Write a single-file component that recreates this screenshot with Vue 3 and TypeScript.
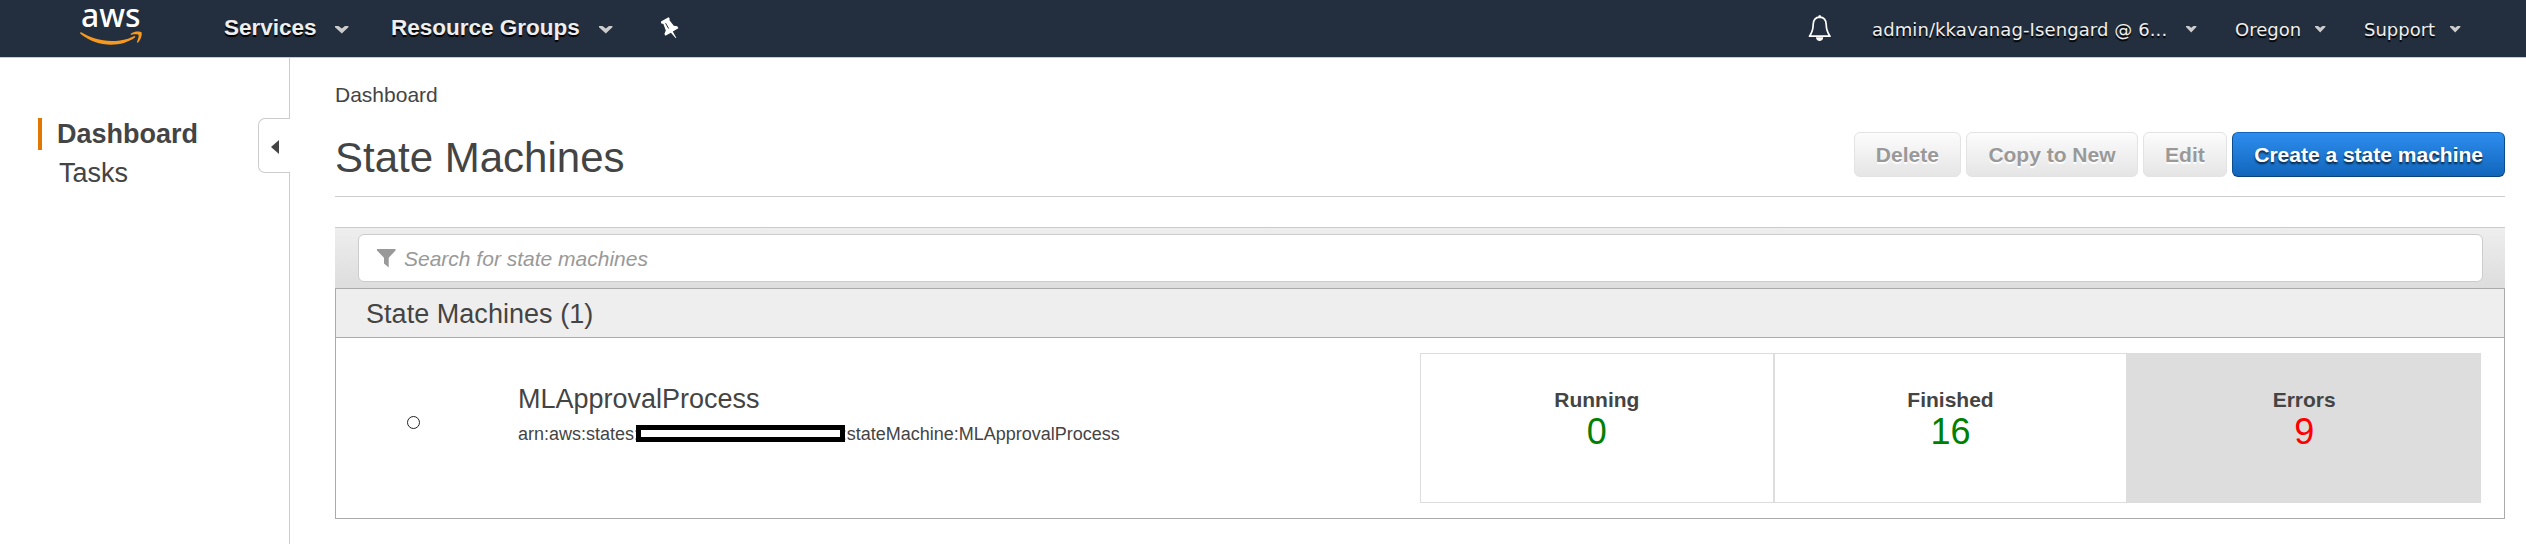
<script setup lang="ts">
interface Stat { label: string; value: number; kind: 'ok' | 'error' }

const mainMenus: { label: string; cls: string }[] = [
  { label: 'Services', cls: 'services' },
  { label: 'Resource Groups', cls: 'groups' },
]
const accountMenus: { label: string; cls: string }[] = [
  { label: 'admin/kkavanag-Isengard @ 6...', cls: 'user' },
  { label: 'Oregon', cls: 'region' },
  { label: 'Support', cls: 'support' },
]
const actions: string[] = ['Delete', 'Copy to New', 'Edit']
const stats: Stat[] = [
  { label: 'Running', value: 0, kind: 'ok' },
  { label: 'Finished', value: 16, kind: 'ok' },
  { label: 'Errors', value: 9, kind: 'error' },
]
</script>

<template>
  <div class="page">
    <header class="nav">
      <svg class="logo" viewBox="0 0 100 56" width="100" height="56">
        <text x="21" y="27.3" textLength="59.5" lengthAdjust="spacingAndGlyphs" class="logo-text">aws</text>
        <path fill="#f7981f" d="M21.2 32.3 C33 39.500 50 44 68 38.700 Q71 37.800 73.800 36.300 Q75.800 35.600 75 37.400 C61 47.600 37 47.600 20.300 33.700 Q19.500 32.300 21.200 32.300Z" />
        <path fill="#f7981f" d="M71 33.500 C74 31 80 31 81.500 32.200 C82.500 34 81 39.500 78 42.600 Q76.600 43.400 77 41.800 C78.200 38.500 79.100 35.600 78.500 34.900 C77.700 34.100 74.500 34.300 71.500 34.700 Q69.800 34.700 71 33.500Z" />
      </svg>
      <nav class="main-menus">
        <a v-for="m in mainMenus" :key="m.label" class="menu" :class="m.cls">
          <span>{{ m.label }}</span>
          <svg width="14" height="8" viewBox="0 0 14 8"><path fill="#ccc" d="M0 0H3.500L6.800 2.600L10 0H13.400V1.200L6.800 7.500L0 1.200Z" /></svg>
        </a>
      </nav>
      <svg class="pin" width="20" height="22" viewBox="0 0 20 22">
        <path fill="#fff" d="M1 4.500 L8.500 0.300 L9.600 1.300 L9.500 3.300 L13.800 8.800 L17.300 9.300 L18.400 11.300 L12.800 14.600 L16.400 20.900 L15.600 21 L10.900 15.700 L5.400 18.800 L4.400 17 L5.800 13.400 L3.400 7 L1 6.200Z" />
        <path stroke="#232f3e" stroke-width="1" fill="none" d="M5.600 6.200 L8.700 11.600" />
      </svg>
      <div class="account">
        <svg class="bell" width="24" height="27" viewBox="0 0 24 27">
          <path fill="none" stroke="#fff" stroke-width="1.700" stroke-linejoin="round" d="M11.700 2.200 C7 2.400 5.300 5.800 5.200 9.500 C5.100 15 4.300 17.300 1.500 21.200 H22 C19.200 17.300 18.300 15 18.200 9.500 C18.100 5.800 16.400 2.400 11.700 2.200Z" />
          <path fill="#fff" d="M10.200 2.200 L10.700 .3 H12.700 L13.200 2.200Z M8 22.200 H15.200 C15.200 27.200 8 27.200 8 22.200Z" />
        </svg>
        <a v-for="m in accountMenus" :key="m.label" class="menu small" :class="m.cls">
          <span>{{ m.label }}</span>
          <svg width="11" height="7" viewBox="0 0 11 7"><path fill="#ccc" d="M0 0H3L5.200 1.700L7.400 0H10.400V1L5.200 6.400L0 1Z" /></svg>
        </a>
      </div>
    </header>

    <div class="body">
      <aside class="sidebar">
        <a class="side-item active">Dashboard</a>
        <a class="side-item">Tasks</a>
        <button class="collapse" aria-label="Collapse">
          <svg width="9" height="14" viewBox="0 0 9 14"><path fill="#444" d="M8 0V14L0 7Z" /></svg>
        </button>
      </aside>

      <main class="content">
        <div class="crumb">Dashboard</div>
        <div class="heading">
          <h1>State Machines</h1>
          <div class="actions">
            <button v-for="a in actions" :key="a" class="btn">{{ a }}</button>
            <button class="btn primary">Create a state machine</button>
          </div>
        </div>

        <div class="search-bar">
          <div class="search">
            <svg width="19" height="19" viewBox="0 0 19 19"><path fill="#999" d="M0 0H18.500V1.500L11.700 8.800V18.600L7 14.500V8.800L0 1.500Z" /></svg>
            <span>Search for state machines</span>
          </div>
        </div>

        <section class="table">
          <h2>State Machines (1)</h2>
          <div class="row">
            <span class="radio"></span>
            <div class="machine">
              <div class="name">MLApprovalProcess</div>
              <div class="arn"><span>arn:aws:states:</span><i class="redacted"></i><span>:stateMachine:MLApprovalProcess</span></div>
            </div>
            <div class="stats">
              <div v-for="s in stats" :key="s.label" class="stat" :class="s.kind">
                <div class="label">{{ s.label }}</div>
                <div class="value">{{ s.value }}</div>
              </div>
            </div>
          </div>
        </section>
      </main>
    </div>
  </div>
</template>

<style>
body { background: #fff; }
</style>

<style scoped>
* { box-sizing: border-box; }
.page { width: 2526px; height: 544px; overflow: hidden; color: #444; background: #fff; font-family: "Liberation Sans", Arial, sans-serif; }
svg { display: block; flex: none; }
.nav { display: flex; height: 58px; background: #232f3e; border-bottom: 1px solid #ccc; }
.logo { margin-left: 60px; overflow: visible; }
.logo-text { font: 500 33px "Noto Sans", "Open Sans", sans-serif; fill: #fff; }
.main-menus { display: flex; margin-left: 64px; }
.menu { display: flex; white-space: nowrap; color: #eee; font-weight: bold; font-size: 22.5px; line-height: 55px; text-shadow: 0 2px 1px #000; }
.menu svg { margin-top: 26px; }
.menu.services { width: 167px; }
.menu.groups { width: 208px; }
.services span { width: 111px; }
.groups span { width: 208px; flex: none; }
.pin { margin: 17px 0 0 61px; }
.account { display: flex; margin-left: auto; padding-right: 65px; }
.bell { margin: 15px 40px 0 0; }
.menu.small { font: 18px/59px "DejaVu Sans", Verdana, sans-serif; }
.user span { width: 314px; letter-spacing: .1px; }
.region { margin-left: 38px; }
.region span { width: 80px; }
.support { margin-left: 38px; }
.support span { width: 86px; }

.body { display: flex; height: 486px; }
.sidebar { position: relative; width: 290px; padding: 60px 0 0 38px; border-right: 1px solid #ccc; }
.side-item { display: block; height: 32px; padding-left: 21px; font-size: 27px; line-height: 32px; }
.side-item.active { border-left: 4px solid #e07700; padding-left: 15px; margin-bottom: 7px; font-weight: bold; }
.collapse { position: absolute; right: -1px; top: 60px; display: flex; align-items: center; width: 32px; height: 55px; padding: 2px 0 0 12px; border: 1px solid #ccc; border-right: 0; border-radius: 7px 0 0 7px; background: #fff; }
.content { width: 2170px; margin-left: 45px; }
.crumb { margin-top: 25px; font-size: 21px; line-height: 24px; }
.heading { display: flex; justify-content: space-between; height: 90px; border-bottom: 1px solid #ccc; }
h1 { margin: 27px 0 0; font-weight: normal; font-size: 42px; line-height: 48px; }
.actions { display: flex; gap: 5.5px; margin-top: 25px; }
.btn { height: 45px; padding: 0 21px; border: 1px solid #e3e3e3; border-radius: 6px; background: linear-gradient(#fcfcfc, #e5e5e5); color: #999; font: bold 21px/41px "Liberation Sans", Arial, sans-serif; text-shadow: 0 2px 1px #fff; white-space: nowrap; }
.btn.primary { border-color: #1166bb #0c4d8d #0a4279; background: linear-gradient(#2e8def, #1166bb); color: #fff; text-shadow: 0 2px 2px rgba(0, 0, 0, .7); }
.search-bar { height: 61px; margin-top: 30px; padding: 6px 22px 0 23px; border-top: 1px solid #ccc; background: linear-gradient(#eee, #ddd); }
.search { display: flex; height: 48px; padding: 14px 0 0 18px; border: 1px solid #ccc; border-radius: 6px; background: #fff; }
.search span { margin-left: 8px; margin-top: -2px; font-size: 21px; line-height: 24px; font-style: italic; color: #999; }
.table { height: 231px; border: 1px solid #aaa; }
h2 { height: 49px; margin: 0; padding-left: 30px; background: #eee; border-bottom: 1px solid #aaa; font-weight: normal; font-size: 27px; line-height: 50px; letter-spacing: .04px; }
.row { display: flex; height: 180px; padding: 15px 23px 15px 71px; }
.radio { width: 13px; height: 13px; margin-top: 63px; border: 1.500px solid #222; border-radius: 50%; }
.machine { margin-left: 98px; padding-top: 30px; }
.name { font-size: 27px; line-height: 32px; }
.arn { display: flex; margin-top: 9px; font-size: 18px; line-height: 20px; }
.redacted { position: relative; width: 209px; height: 17px; margin: 1px -3.400px 0 -3px; border: 5px solid #000; background: #fff; }
.stats { display: grid; grid-template-columns: repeat(3, 1fr); width: 1061px; height: 150px; margin-left: auto; text-align: center; }
.stat { padding-top: 34px; border: 1px solid #ddd; }
.stat.error { background: #ddd; }
.label { font-weight: bold; font-size: 21px; line-height: 24px; }
.value { font-size: 36px; line-height: 40px; color: green; }
.error .value { color: red; }
</style>
